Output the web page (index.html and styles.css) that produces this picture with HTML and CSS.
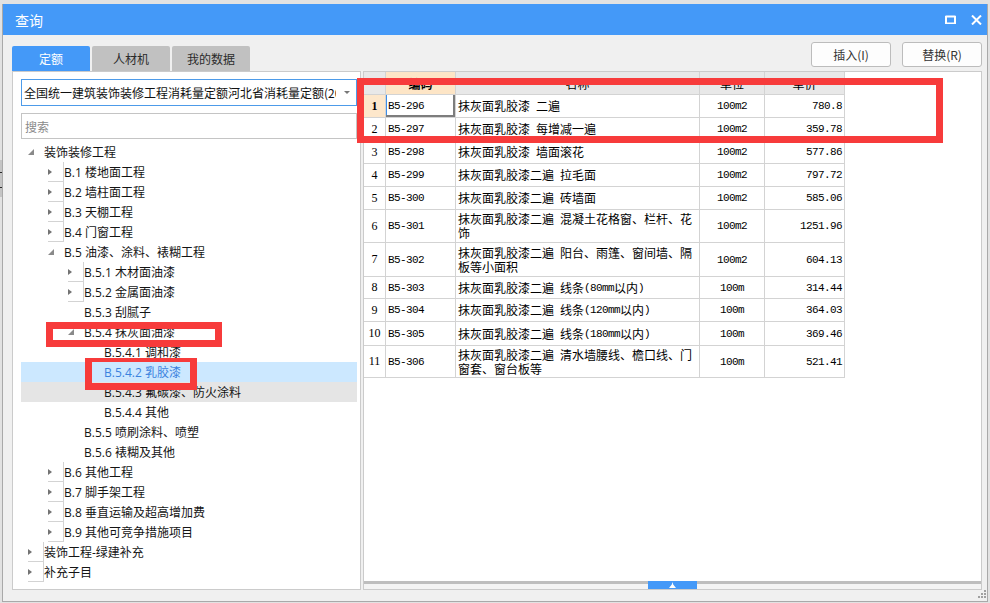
FILE: index.html
```html
<!DOCTYPE html>
<html lang="zh-CN">
<head>
<meta charset="utf-8">
<title>查询</title>
<link rel="stylesheet" href="styles.css">
</head>
<body>
<div class="edge-grip"></div>
<div class="window">
  <div class="titlebar">
    <span class="title">查询</span>
    <div class="win-btns">
      <svg class="ico-max" width="11" height="9" viewBox="0 0 11 9"><path d="M0.5 1.5H10.5M1 1V8.5H10V1" fill="none" stroke="#fff" stroke-width="2"/></svg>
      <svg class="ico-close" width="11" height="10" viewBox="0 0 11 10"><path d="M1 0.5L10 9.5M10 0.5L1 9.5" stroke="#fff" stroke-width="2"/></svg>
    </div>
  </div>
  <div class="topbar">
    <div class="tabs">
      <div class="tab active">定额</div>
      <div class="tab">人材机</div>
      <div class="tab">我的数据</div>
    </div>
    <div class="actions">
      <button class="btn">插入(I)</button>
      <button class="btn">替换(R)</button>
    </div>
  </div>
  <div class="panels">
    <div class="left-panel">
      <div class="combo">
        <span class="combo-text">全国统一建筑装饰装修工程消耗量定额河北省消耗量定额(2012)</span>
        <span class="combo-arrow"></span>
      </div>
      <div class="search">搜索</div>
      <div class="tree">
        <div class="row l0"><span class="tw e"></span>装饰装修工程</div>
        <div class="row l1"><span class="tw c"></span>B.1 楼地面工程</div>
        <div class="row l1"><span class="tw c"></span>B.2 墙柱面工程</div>
        <div class="row l1"><span class="tw c"></span>B.3 天棚工程</div>
        <div class="row l1"><span class="tw c"></span>B.4 门窗工程</div>
        <div class="row l1"><span class="tw e"></span>B.5 油漆、涂料、裱糊工程</div>
        <div class="row l2"><span class="tw c"></span>B.5.1 木材面油漆</div>
        <div class="row l2"><span class="tw c"></span>B.5.2 金属面油漆</div>
        <div class="row l2"><span class="tw"></span>B.5.3 刮腻子</div>
        <div class="row l2"><span class="tw e"></span>B.5.4 抹灰面油漆</div>
        <div class="row l3"><span class="tw"></span>B.5.4.1 调和漆</div>
        <div class="row l3 selected"><span class="tw"></span>B.5.4.2 乳胶漆</div>
        <div class="row l3 hover"><span class="tw"></span>B.5.4.3 氟碳漆、防火涂料</div>
        <div class="row l3"><span class="tw"></span>B.5.4.4 其他</div>
        <div class="row l2"><span class="tw"></span>B.5.5 喷刷涂料、喷塑</div>
        <div class="row l2"><span class="tw"></span>B.5.6 裱糊及其他</div>
        <div class="row l1"><span class="tw c"></span>B.6 其他工程</div>
        <div class="row l1"><span class="tw c"></span>B.7 脚手架工程</div>
        <div class="row l1"><span class="tw c"></span>B.8 垂直运输及超高增加费</div>
        <div class="row l1"><span class="tw c"></span>B.9 其他可竞争措施项目</div>
        <div class="row l0"><span class="tw c"></span>装饰工程-绿建补充</div>
        <div class="row l0"><span class="tw c"></span>补充子目</div>
      </div>
    </div>
    <div class="right-panel">
      <div class="table-area">
        <div class="grid">
          <div class="c hd num"></div>
          <div class="c hd code-h">编码</div>
          <div class="c hd">名称</div>
          <div class="c hd">单位</div>
          <div class="c hd">单价</div>

          <div class="c num cur">1</div>
          <div class="c code sel">B5-296</div>
          <div class="c name">抹灰面乳胶漆&ensp;二遍</div>
          <div class="c unit">100m2</div>
          <div class="c price">780.8</div>

          <div class="c num">2</div>
          <div class="c code">B5-297</div>
          <div class="c name">抹灰面乳胶漆&ensp;每增减一遍</div>
          <div class="c unit">100m2</div>
          <div class="c price">359.78</div>

          <div class="c num">3</div>
          <div class="c code">B5-298</div>
          <div class="c name">抹灰面乳胶漆&ensp;墙面滚花</div>
          <div class="c unit">100m2</div>
          <div class="c price">577.86</div>

          <div class="c num">4</div>
          <div class="c code">B5-299</div>
          <div class="c name">抹灰面乳胶漆二遍&ensp;拉毛面</div>
          <div class="c unit">100m2</div>
          <div class="c price">797.72</div>

          <div class="c num">5</div>
          <div class="c code">B5-300</div>
          <div class="c name">抹灰面乳胶漆二遍&ensp;砖墙面</div>
          <div class="c unit">100m2</div>
          <div class="c price">585.06</div>

          <div class="c num">6</div>
          <div class="c code">B5-301</div>
          <div class="c name two"><span class="ln">抹灰面乳胶漆二遍&ensp;混凝土花格窗、栏杆、花</span><span class="ln">饰</span></div>
          <div class="c unit">100m2</div>
          <div class="c price">1251.96</div>

          <div class="c num">7</div>
          <div class="c code">B5-302</div>
          <div class="c name two"><span class="ln">抹灰面乳胶漆二遍&ensp;阳台、雨篷、窗间墙、隔</span><span class="ln">板等小面积</span></div>
          <div class="c unit">100m2</div>
          <div class="c price">604.13</div>

          <div class="c num">8</div>
          <div class="c code">B5-303</div>
          <div class="c name">抹灰面乳胶漆二遍&ensp;线条<span class="asc">(80mm</span>以内<span class="asc">)</span></div>
          <div class="c unit">100m</div>
          <div class="c price">314.44</div>

          <div class="c num">9</div>
          <div class="c code">B5-304</div>
          <div class="c name">抹灰面乳胶漆二遍&ensp;线条<span class="asc">(120mm</span>以内<span class="asc">)</span></div>
          <div class="c unit">100m</div>
          <div class="c price">364.03</div>

          <div class="c num">10</div>
          <div class="c code">B5-305</div>
          <div class="c name">抹灰面乳胶漆二遍&ensp;线条<span class="asc">(180mm</span>以内<span class="asc">)</span></div>
          <div class="c unit">100m</div>
          <div class="c price">369.46</div>

          <div class="c num">11</div>
          <div class="c code">B5-306</div>
          <div class="c name two"><span class="ln">抹灰面乳胶漆二遍&ensp;清水墙腰线、檐口线、门</span><span class="ln">窗套、窗台板等</span></div>
          <div class="c unit">100m</div>
          <div class="c price">521.41</div>
        </div>
      </div>
      <div class="splitter">
        <div class="split-tab">
          <svg width="7" height="6" viewBox="0 0 7 6"><polygon points="3.5,0 4.2,2.5 7,6 0,6 2.8,2.5" fill="#fff"/></svg>
        </div>
      </div>
    </div>
  </div>
  <svg class="grip" width="9" height="9" viewBox="0 0 9 9">
    <rect x="6" y="0" width="2" height="2" fill="#a0a0a0"/>
    <rect x="3" y="3" width="2" height="2" fill="#a0a0a0"/>
    <rect x="6" y="3" width="2" height="2" fill="#a0a0a0"/>
    <rect x="0" y="6" width="2" height="2" fill="#a0a0a0"/>
    <rect x="3" y="6" width="2" height="2" fill="#a0a0a0"/>
    <rect x="6" y="6" width="2" height="2" fill="#a0a0a0"/>
  </svg>
</div>
<div class="mark mark-table"></div>
<div class="mark mark-node"></div>
<div class="mark mark-sel"></div>
</body>
</html>
```
FILE: styles.css
```css
html, body {
  margin: 0;
  padding: 0;
}
body {
  width: 990px;
  height: 603px;
  overflow: hidden;
  position: relative;
  background: #e2e2e2;
  font-family: "Noto Sans CJK SC", sans-serif;
  font-size: 12px;
  color: #1a1a1a;
}
.edge-grip {
  position: absolute;
  left: 0;
  top: 160px;
  width: 2px;
  height: 37px;
  background: repeating-linear-gradient(#c4c4c4 0 12px, #2a2a2a 12px 13px, #c4c4c4 13px 15px);
}
.window {
  position: relative;
  margin: 4px 0 0 2px;
  width: 986px;
  height: 598px;
  box-sizing: border-box;
  border: 1px solid #a9a9a9;
  border-top: none;
  background: #f0f0f0;
  display: flex;
  flex-direction: column;
}
.titlebar {
  height: 31px;
  flex: none;
  background: #4499f8;
  display: flex;
  align-items: center;
  justify-content: space-between;
  padding: 0 5px 0 12px;
}
.title {
  color: #fff;
  font-size: 14px;
  line-height: 1;
}
.win-btns {
  display: flex;
  align-items: center;
  gap: 15px;
}
.ico-max, .ico-close {
  display: block;
}
.topbar {
  height: 36px;
  flex: none;
  display: flex;
  justify-content: space-between;
  padding: 0 5px 0 9px;
}
.tabs {
  display: flex;
  align-items: flex-end;
  gap: 2px;
}
.tab {
  width: 78px;
  height: 25px;
  box-sizing: border-box;
  background: #c1c1c1;
  border-radius: 2px 2px 0 0;
  color: #2b2b2b;
  display: flex;
  align-items: center;
  justify-content: center;
  font-size: 12px;
}
.tab.active {
  background: #4499f8;
  color: #fff;
}
.actions {
  display: flex;
  gap: 11px;
  padding-top: 7px;
}
.btn {
  width: 80px;
  height: 25px;
  box-sizing: border-box;
  border: 1px solid #bcbcbc;
  border-radius: 3px;
  background: #fdfdfd;
  font-family: "Noto Sans CJK SC", sans-serif;
  font-size: 12px;
  color: #333;
  padding: 0;
}
.panels {
  height: 519px;
  flex: none;
  display: flex;
  gap: 2px;
  padding: 0 5px 0 9px;
}
.left-panel {
  width: 349px;
  box-sizing: border-box;
  border: 1px solid #cbcbcb;
  background: #fff;
  display: flex;
  flex-direction: column;
}
.combo {
  margin: 7px 3px 0 8px;
  height: 27px;
  box-sizing: border-box;
  border: 1px solid #4d9be9;
  display: flex;
  align-items: center;
  padding: 0 6px 0 2px;
  gap: 8px;
}
.combo-text {
  flex: 1;
  overflow: hidden;
  white-space: nowrap;
  color: #111;
  font-size: 12px;
}
.combo-arrow {
  flex: none;
  width: 0;
  height: 0;
  border-top: 3px solid #777;
  border-left: 3px solid transparent;
  border-right: 3px solid transparent;
}
.search {
  margin: 7px 3px 0 8px;
  height: 26px;
  box-sizing: border-box;
  border: 1px solid #c4c4c4;
  display: flex;
  align-items: center;
  padding-left: 3px;
  color: #8a8a8a;
  font-size: 12px;
}
.tree {
  margin: 3px 3px 0 8px;
}
.row {
  height: 20px;
  display: flex;
  align-items: center;
  white-space: nowrap;
  font-family: "Open Sans", "Noto Sans CJK SC", sans-serif;
  font-size: 12px;
  color: #141414;
}
.row.l0 { padding-left: 7px; }
.row.l1 { padding-left: 27px; }
.row.l2 { padding-left: 47px; }
.row.l3 { padding-left: 67px; }
.row.selected {
  background: #cce8ff;
  color: #3b82de;
}
.row.hover {
  background: #e5e5e5;
}
.tw {
  width: 16px;
  height: 20px;
  flex: none;
  display: flex;
  align-items: center;
}
.tw.c::before {
  content: "";
  width: 0;
  height: 0;
  border-left: 4px solid #737373;
  border-top: 3.5px solid transparent;
  border-bottom: 3.5px solid transparent;
}
.tw.e::before {
  content: "";
  width: 0;
  height: 0;
  border-bottom: 6px solid #8a8a8a;
  border-left: 6px solid transparent;
}
.right-panel {
  width: 619px;
  box-sizing: border-box;
  border: 1px solid #cbcbcb;
  background: #fff;
  display: flex;
  flex-direction: column;
}
.table-area {
  flex: 1;
  overflow: hidden;
}
.grid {
  display: grid;
  grid-template-columns: 22px 70px 244px 65px 80px;
  grid-template-rows: 23px 23px 23px 23px 23px 23px 33px 34px 22px 23px 24px 32px;
  width: 481px;
}
.c {
  box-sizing: border-box;
  border-right: 1px solid #d3d3d3;
  border-bottom: 1px solid #d3d3d3;
  display: flex;
  align-items: center;
  overflow: hidden;
  white-space: nowrap;
  color: #000;
}
.hd {
  background: #e8e8e8;
  justify-content: center;
  font-size: 12px;
}
.code-h {
  background: #fde5c6;
  font-weight: bold;
}
.num {
  justify-content: center;
  font-family: "Liberation Serif", serif;
  font-size: 12px;
}
.num.cur {
  background: #fde7cb;
  font-weight: bold;
}
.code {
  padding-left: 2px;
  font-family: "Liberation Mono", monospace;
  font-size: 11px;
  letter-spacing: -0.6px;
}
.code.sel {
  box-shadow: inset -2px -2px 0 #7d7d7d, inset 1px 0 0 #3d8ee8;
}
.name {
  padding-left: 2px;
  font-size: 12px;
  line-height: 14px;
}
.name.two {
  flex-direction: column;
  align-items: flex-start;
  justify-content: center;
}
.ln {
  display: block;
  height: 14px;
  line-height: 14px;
}
.asc {
  font-family: "Liberation Mono", monospace;
  font-size: 11px;
  letter-spacing: -0.6px;
}
.unit {
  justify-content: center;
  font-family: "Liberation Mono", monospace;
  font-size: 11px;
  letter-spacing: -0.6px;
}
.price {
  justify-content: flex-end;
  padding-right: 2px;
  font-family: "Liberation Mono", monospace;
  font-size: 11px;
  letter-spacing: -0.6px;
}
.splitter {
  height: 8px;
  flex: none;
  background: linear-gradient(#bebebe 0 3px, #f4f4f4 3px 8px);
  display: flex;
  justify-content: center;
}
.split-tab {
  width: 49px;
  height: 8px;
  background: #4499f8;
  display: flex;
  align-items: center;
  justify-content: center;
}
.split-tab svg {
  display: block;
}
.grip {
  position: absolute;
  right: 0;
  bottom: 2px;
}
.mark {
  position: absolute;
  box-sizing: border-box;
  border: 7px solid #f73b3b;
}
.mark-table {
  left: 357px;
  top: 78px;
  width: 586px;
  height: 65px;
}
.mark-node {
  left: 46px;
  top: 322px;
  width: 176px;
  height: 25px;
}
.mark-sel {
  left: 85px;
  top: 358px;
  width: 112px;
  height: 32px;
  border-top-width: 4px;
}
```
